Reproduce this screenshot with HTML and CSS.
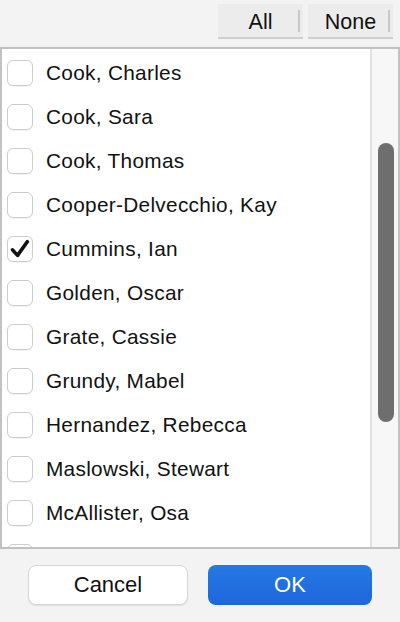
FILE: index.html
```html
<!DOCTYPE html>
<html>
<head>
<meta charset="utf-8">
<link rel="stylesheet" href="styles.css">
</head>
<body>
<div class="dialog">
  <div class="topbar">
    <button class="seg">All</button>
    <button class="seg">None</button>
  </div>
  <div class="panel">
    <div class="list">
      <div class="row"><span class="cb"></span><span class="name">Cook, Charles</span></div>
      <div class="row"><span class="cb"></span><span class="name">Cook, Sara</span></div>
      <div class="row"><span class="cb"></span><span class="name">Cook, Thomas</span></div>
      <div class="row"><span class="cb"></span><span class="name">Cooper-Delvecchio, Kay</span></div>
      <div class="row"><span class="cb checked"><svg width="22" height="22" viewBox="0 0 20 20"><path d="M3.2 10.8 L7.8 15.8 L16.6 3.4" fill="none" stroke="#111" stroke-width="3.3" stroke-linecap="round" stroke-linejoin="round"/></svg></span><span class="name">Cummins, Ian</span></div>
      <div class="row"><span class="cb"></span><span class="name">Golden, Oscar</span></div>
      <div class="row"><span class="cb"></span><span class="name">Grate, Cassie</span></div>
      <div class="row"><span class="cb"></span><span class="name">Grundy, Mabel</span></div>
      <div class="row"><span class="cb"></span><span class="name">Hernandez, Rebecca</span></div>
      <div class="row"><span class="cb"></span><span class="name">Maslowski, Stewart</span></div>
      <div class="row"><span class="cb"></span><span class="name">McAllister, Osa</span></div>
      <div class="row"><span class="cb"></span></div>
    </div>
    <div class="scrollbar"><div class="thumb"></div></div>
  </div>
  <div class="actions">
    <button class="btn cancel">Cancel</button>
    <button class="btn ok">OK</button>
  </div>
</div>
</body>
</html>
```
FILE: styles.css
```css
html, body {
  margin: 0;
  padding: 0;
  background: #f3f3f3;
}
body {
  width: 400px;
  height: 622px;
  overflow: hidden;
  font-family: "Liberation Sans", Arial, sans-serif;
  color: #111;
}
.dialog {
  display: flex;
  flex-direction: column;
  height: 622px;
}
.topbar {
  height: 47px;
  display: flex;
  justify-content: flex-end;
  align-items: flex-start;
  gap: 5px;
  padding-right: 7px;
  box-sizing: border-box;
  padding-top: 4px;
}
.seg {
  width: 85px;
  height: 35px;
  border: none;
  border-bottom: 2px solid #cfcfcf;
  background: #ececec;
  font-family: inherit;
  font-size: 21.5px;
  color: #111;
  padding: 4px 0 0 0;
  position: relative;
}
.seg::after {
  content: "";
  position: absolute;
  right: 3px;
  top: 6px;
  bottom: 5px;
  width: 2px;
  background: #c8c8c8;
}
.panel {
  height: 502px;
  box-sizing: border-box;
  border: 2px solid #c2c2c2;
  background: #fff;
  display: flex;
  overflow: hidden;
}
.list {
  flex: 1;
  overflow: hidden;
  padding-top: 2px;
}
.row {
  height: 44px;
  display: flex;
  align-items: center;
}
.cb {
  width: 26px;
  height: 26px;
  box-sizing: border-box;
  border: 1px solid #cdcdcd;
  border-radius: 6px;
  background: #fff;
  margin-left: 5px;
  margin-right: 13px;
  display: flex;
  align-items: center;
  justify-content: center;
  flex: none;
  box-shadow: 0 1px 1px rgba(0,0,0,0.05);
}
.name {
  font-size: 20.8px;
  letter-spacing: 0.3px;
  color: #111;
}
.scrollbar {
  width: 28px;
  flex: none;
  box-sizing: border-box;
  border-left: 2px solid #e2e2e2;
  background: #f7f7f7;
  padding-top: 94px;
  padding-left: 6px;
}
.thumb {
  width: 16px;
  height: 279px;
  border-radius: 8px;
  background: #6e6e6e;
}
.actions {
  flex: 1;
  display: flex;
  align-items: center;
  gap: 20px;
  padding-left: 28px;
  padding-bottom: 1px;
}
.btn {
  height: 40px;
  border-radius: 8px;
  font-family: inherit;
  font-size: 22px;
  padding: 0;
}
.cancel {
  width: 160px;
  background: #fff;
  border: 1px solid #d6d6d6;
  color: #111;
  box-shadow: 0 1px 1px rgba(0,0,0,0.08);
}
.ok {
  width: 164px;
  border: none;
  color: #fff;
  background: linear-gradient(#2479e3, #1f66dc);
}
```
